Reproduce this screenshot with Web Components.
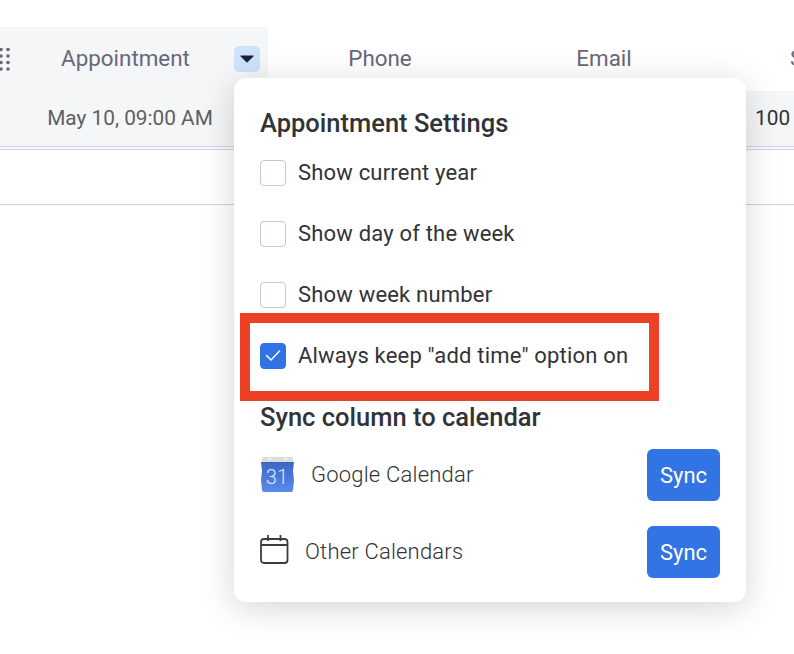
<!DOCTYPE html>
<html><head><meta charset="utf-8"><style>
html,body{margin:0;padding:0;background:#fff;overflow:hidden;height:654px;font-family:Roboto,sans-serif}
</style></head><body>
<board-table>
  <check-menu slot="popup"></check-menu>
</board-table>
<template id="tb">
<style>
:host{display:block;position:relative;width:794px;height:654px;padding-top:27px;box-sizing:border-box;overflow:hidden}
.row{display:grid;grid-template-columns:268px 224px 224px 1fr}
.head{height:64px}
.head>div{font-size:22.4px;color:#676879;display:flex;align-items:center;justify-content:center;padding-bottom:2px;box-sizing:border-box}
.head .appt{background:#f5f6f8;position:relative;border-radius:0 4px 0 0;padding-right:17px}
.body{height:55px;background:#f5f6f8;box-sizing:border-box}
.body>div{font-size:20.8px;color:#5f5f5f;display:flex;align-items:center;padding-bottom:2px;box-sizing:border-box}
.date{justify-content:center;padding-right:8px}
.num{grid-column:4;color:#323338!important;justify-content:flex-start;padding-left:39px}
.line{height:1px;background:#d0d0e6}
.gap{height:2px;background:#fbfbfc}
.l2{height:54px}
.drag{position:absolute;left:0;top:21px;width:14px;height:24px}
.arrow{position:absolute;left:234px;top:19px;width:26px;height:26px;border-radius:5px;background:#cfe2fb;display:flex;align-items:center;justify-content:center}
</style>
<div class="row head">
  <div class="appt">
    <svg class="drag" viewBox="0 0 14 24"><g fill="#676879"><circle cx="1" cy="1.500" r="1.800"/><circle cx="8" cy="1.500" r="1.800"/><circle cx="1" cy="8" r="1.800"/><circle cx="8" cy="8" r="1.800"/><circle cx="1" cy="14.500" r="1.800"/><circle cx="8" cy="14.500" r="1.800"/><circle cx="1" cy="21" r="1.800"/><circle cx="8" cy="21" r="1.800"/></g></svg>
    Appointment
    <span class="arrow"><svg width="14" height="8" viewBox="0 0 14 8"><path d="M1 .6h12c.5 0 .7.5.4.9L7.500 7.300c-.3.3-.7.3-1 0L.6 1.500C.3 1.100.5.600 1 .600z" fill="#1f2130"/></svg></span>
  </div>
  <div class="phone">Phone</div>
  <div class="email">Email</div>
  <div class="s" style="justify-content:flex-start;padding-left:74px">S</div>
</div>
<div class="row body"><div class="date">May 10, 09:00 AM</div><div class="num">100</div></div>
<div class="line"></div><div class="gap"></div><div class="line"></div>
<div class="l2"></div>
<div class="line"></div>
<slot name="popup"></slot>
</template>
<template id="cm">
<style>
:host{display:block;position:absolute;left:234px;top:78px;width:512px;height:524px;box-sizing:border-box;background:#fff;border-radius:12px;box-shadow:0 6px 34px rgba(0,0,0,.17);padding:29px 26px 0 26px;color:#323338;z-index:5}
h3{margin:0;font-size:25.5px;font-weight:500;line-height:32px;color:#323338}
.opts{display:flex;flex-direction:column;margin-top:3px}
.rows{display:flex;flex-direction:column;margin-top:3px}
h3.s2{margin-top:15px}
</style>
<h3>Appointment Settings</h3>
<div class="opts">
<check-row>Show current year</check-row>
<check-row>Show day of the week</check-row>
<check-row>Show week number</check-row>
<check-row checked>Always keep "add time" option on</check-row>
</div>
<h3 class="s2">Sync column to calendar</h3>
<div class="rows">
<sync-row><svg slot="icon" width="36" height="38" viewBox="0 0 36 38"><defs><linearGradient id="g" x1="0" y1="0" x2="0" y2="1"><stop offset="0" stop-color="#3c66c6"/><stop offset="1" stop-color="#5a8bec"/></linearGradient></defs><path d="M2 2.500Q2 1 3.500 1h28Q33 1 33 2.500V7H2z" fill="#dcdcdc"/><rect x="8" y="2" width="3" height="2" fill="#f2f2f2"/><rect x="24" y="2" width="3" height="2" fill="#f2f2f2"/><path d="M1 6h33l-1 9 1 9-1 10q0 2-2 2H4q-2 0-2-2L1 24l1-9z" fill="url(#g)"/><text x="17" y="28" text-anchor="middle" font-family="Roboto,sans-serif" font-size="20" fill="#dfe8fb">31</text></svg>Google Calendar</sync-row>
<sync-row other><svg slot="icon" width="30" height="29" viewBox="0 0 30 29" fill="none" stroke="#3c3c42" stroke-width="1.800" style="margin-bottom:4px"><rect x="1" y="4" width="26.500" height="24" rx="3"/><path d="M1 10h26.500M8 0v6M20.500 0v6"/></svg>Other Calendars</sync-row>
</div>
</template>
<template id="cr">
<style>
:host{display:flex;align-items:center;gap:12px;height:61px;font-size:22px;letter-spacing:.19px;color:#323338}
.box{width:26px;height:26px;box-sizing:border-box;border:1px solid #c5c7d4;border-radius:4px;background:#fff;display:flex;align-items:center;justify-content:center;flex:none}
:host([checked]) .box{background:#2f73e4;border-color:#2f73e4}
svg{display:none}
:host([checked]) svg{display:block}
</style>
<span class="box"><svg width="16" height="13" viewBox="0 0 16 13"><path d="M1.500 6.500 6 11 14.500 2" fill="none" stroke="#fff" stroke-width="1.500" stroke-linecap="round" stroke-linejoin="round"/></svg></span>
<span><slot></slot></span>
</template>
<template id="sr">
<style>
:host{display:flex;align-items:center;height:77px;font-size:22px;letter-spacing:.2px;font-weight:300;color:#323338}
.ic{display:flex;margin-right:15px;width:36px;flex:none}
:host([other]) .ic{width:30px;margin-right:15px}
.t{flex:1}
button{width:73px;height:52px;border:0;border-radius:6px;background:#3274e3;color:#fff;font:400 22px Roboto,sans-serif;padding:2px 0 0}
</style>
<span class="ic"><slot name="icon"></slot></span><span class="t"><slot></slot></span><button>Sync</button>
</template>
<highlight-box></highlight-box>
<template id="hb">
<style>
:host{display:block;position:absolute;left:240px;top:313px;width:419px;height:88px;box-sizing:border-box;border:10px solid #ec4125;z-index:10;pointer-events:none}
</style>
</template>
<script>
function def(n,t){customElements.define(n,class extends HTMLElement{constructor(){super();this.attachShadow({mode:'open'}).appendChild(document.getElementById(t).content.cloneNode(true))}})}
def('board-table','tb');def('check-menu','cm');def('check-row','cr');def('sync-row','sr');def('highlight-box','hb');
</script>
</body></html>
